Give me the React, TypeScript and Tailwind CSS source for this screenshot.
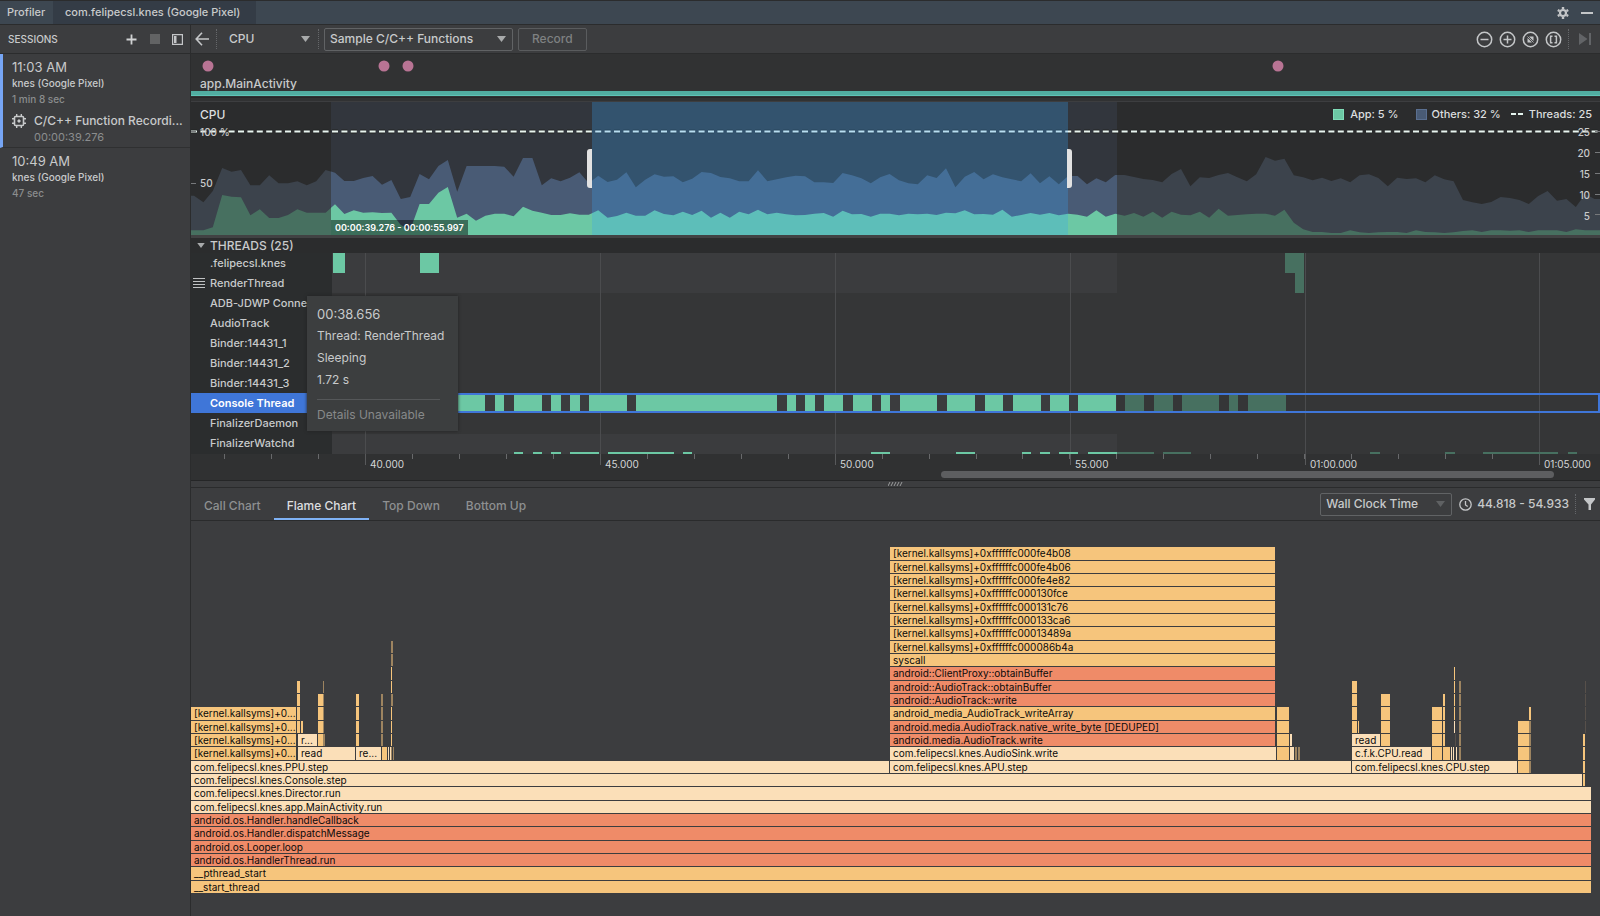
import React from 'react';

// The timeline is laid out on a 1409 unit wide scale that starts at 191
const ORIGIN = 191;
const SPAN = 1409;
const pct = (x: number) => `${((x - ORIGIN) / SPAN) * 100}%`;
const wpct = (a: number, b: number) => `${((b - a) / SPAN) * 100}%`;

const COLORS = {
  k: '#f6c57c',
  l: '#fbdfb8',
  r: '#ef8b68',
  b: '#9d8460',
  d: '#57504a',
};

const othersY = [
  587, 607, 573, 504, 515, 510, 556, 556, 526, 550, 550, 544, 556, 544, 510, 518, 543, 543, 534, 528,
  554, 540, 597, 591, 522, 538, 498, 480, 575, 498, 498, 498, 498, 500, 530, 474, 474, 556, 535, 544,
  533, 517, 550, 527, 546, 539, 517, 562, 539, 523, 530, 529, 547, 536, 516, 519, 531, 535, 544, 544,
  511, 544, 538, 532, 527, 529, 547, 547, 549, 519, 526, 535, 550, 532, 522, 541, 550, 553, 526, 534,
  505, 562, 530, 516, 538, 523, 532, 538, 544, 520, 550, 529, 553, 528, 528, 553, 535, 547, 525, 525,
  531, 537, 540, 547, 522, 507, 559, 532, 534, 525, 519, 532, 544, 523, 471, 482, 476, 526, 532, 541,
  533, 543, 535, 547, 526, 523, 534, 559, 533, 537, 535, 547, 526, 538, 544, 600, 607, 612, 606, 591,
  594, 600, 612, 588, 573, 602, 597, 621, 582, 597, 597,
];

const appY = [
  691, 691, 682, 585, 590, 592, 646, 628, 654, 654, 645, 628, 638, 638, 638, 613, 642, 631, 638, 637,
  639, 638, 675, 690, 612, 612, 578, 561, 653, 641, 662, 647, 641, 641, 649, 620, 632, 638, 645, 645,
  640, 644, 644, 631, 653, 648, 638, 647, 647, 631, 642, 646, 635, 645, 632, 653, 638, 653, 635, 643,
  629, 643, 638, 643, 646, 645, 641, 639, 650, 632, 643, 642, 650, 641, 641, 646, 641, 643, 641, 645,
  638, 640, 631, 643, 642, 644, 629, 650, 645, 639, 644, 639, 646, 641, 644, 650, 631, 650, 641, 647,
  639, 650, 635, 653, 635, 644, 646, 635, 653, 626, 647, 645, 643, 641, 641, 647, 629, 668, 688, 696,
  696, 699, 699, 691, 697, 699, 697, 696, 696, 699, 691, 696, 697, 699, 697, 693, 691, 696, 691, 691,
  692, 691, 696, 691, 691, 691, 696, 688, 691, 691, 691,
];

const area = (ys: number[]) =>
  `0,133 0,${ys[0] / 3 - 102} ` +
  ys.map((y, i) => `${(3 + i * 9.4).toFixed(1)},${(y / 3 - 102).toFixed(1)}`).join(' ') +
  ' 1420,133';

const threads = [
  '.felipecsl.knes', 'RenderThread', 'ADB-JDWP Connection', 'AudioTrack', 'Binder:14431_1',
  'Binder:14431_2', 'Binder:14431_3', 'Console Thread', 'FinalizerDaemon', 'FinalizerWatchd',
];

const running = [
  [332, 485], [495, 504], [514, 542], [551, 561], [570, 580], [589, 627], [636, 777], [787, 796],
  [805, 815], [824, 843], [853, 872], [881, 890], [900, 937], [947, 975], [985, 1003], [1013, 1041],
  [1050, 1069], [1078, 1116],
];
const runningDim = [[1125, 1144], [1154, 1173], [1182, 1219], [1229, 1238], [1248, 1286]];
const watchd = [
  [514, 523], [533, 542], [551, 561], [570, 599], [608, 674], [683, 692], [871, 890], [956, 975],
  [1022, 1031], [1040, 1050], [1059, 1078], [1088, 1117],
];
const watchdDim = [[1117, 1154], [1163, 1191], [1370, 1380], [1445, 1455], [1483, 1558], [1568, 1577]];

const majors = [
  { x: 365, label: '40.000' }, { x: 600, label: '45.000' }, { x: 835, label: '50.000' },
  { x: 1070, label: '55.000' }, { x: 1305, label: '01:00.000' }, { x: 1539, label: '01:05.000' },
];

type Color = keyof typeof COLORS;
// from row, to row (counted from the bottom), left, right, color, label
type Block = [number, number, number, number, Color, string?];

const blocks: Block[] = [
  [0, 0, 191, 1591, 'k', '__start_thread'],
  [1, 1, 191, 1591, 'k', '__pthread_start'],
  [2, 2, 191, 1591, 'r', 'android.os.HandlerThread.run'],
  [3, 3, 191, 1591, 'r', 'android.os.Looper.loop'],
  [4, 4, 191, 1591, 'r', 'android.os.Handler.dispatchMessage'],
  [5, 5, 191, 1591, 'r', 'android.os.Handler.handleCallback'],
  [6, 6, 191, 1591, 'l', 'com.felipecsl.knes.app.MainActivity.run'],
  [7, 7, 191, 1591, 'l', 'com.felipecsl.knes.Director.run'],
  [8, 8, 191, 1582, 'l', 'com.felipecsl.knes.Console.step'],
  [9, 9, 191, 889, 'l', 'com.felipecsl.knes.PPU.step'],
  [9, 9, 890, 1351, 'l', 'com.felipecsl.knes.APU.step'],
  [9, 9, 1352, 1517, 'l', 'com.felipecsl.knes.CPU.step'],
  [10, 10, 191, 296, 'k', '[kernel.kallsyms]+0...'],
  [11, 11, 191, 296, 'k', '[kernel.kallsyms]+0...'],
  [12, 12, 191, 296, 'k', '[kernel.kallsyms]+0...'],
  [13, 13, 191, 296, 'k', '[kernel.kallsyms]+0...'],
  [10, 10, 298, 355, 'l', 'read'],
  [10, 10, 356, 381, 'l', 're...'],
  [10, 10, 382, 387, 'k'],
  [10, 10, 388, 389, 'l'],
  [10, 10, 390, 391, 'l'],
  [10, 10, 391, 392, 'b'],
  [10, 10, 393, 394, 'b'],
  [11, 11, 298, 317, 'l', 'r...'],
  [12, 15, 297, 300, 'k'],
  [12, 12, 301, 303, 'k'],
  [11, 14, 318, 323, 'k'],
  [11, 15, 323, 324, 'b'],
  [11, 11, 324, 325, 'b'],
  [11, 14, 356, 359, 'k'],
  [11, 14, 381, 383, 'b'],
  [11, 16, 391, 392, 'k'],
  [14, 14, 391, 393, 'b'],
  [17, 18, 391, 393, 'b'],
  [10, 10, 890, 1276, 'l', 'com.felipecsl.knes.AudioSink.write'],
  [11, 11, 890, 1275, 'r', 'android.media.AudioTrack.write'],
  [12, 12, 890, 1275, 'r', 'android.media.AudioTrack.native_write_byte [DEDUPED]'],
  [13, 13, 890, 1275, 'k', 'android_media_AudioTrack_writeArray'],
  [14, 14, 890, 1275, 'r', 'android::AudioTrack::write'],
  [15, 15, 890, 1275, 'r', 'android::AudioTrack::obtainBuffer'],
  [16, 16, 890, 1275, 'r', 'android::ClientProxy::obtainBuffer'],
  [17, 17, 890, 1275, 'k', 'syscall'],
  [18, 18, 890, 1275, 'k', '[kernel.kallsyms]+0xffffffc000086b4a'],
  [19, 19, 890, 1275, 'k', '[kernel.kallsyms]+0xffffffc00013489a'],
  [20, 20, 890, 1275, 'k', '[kernel.kallsyms]+0xffffffc000133ca6'],
  [21, 21, 890, 1275, 'k', '[kernel.kallsyms]+0xffffffc000131c76'],
  [22, 22, 890, 1275, 'k', '[kernel.kallsyms]+0xffffffc000130fce'],
  [23, 23, 890, 1275, 'k', '[kernel.kallsyms]+0xffffffc000fe4e82'],
  [24, 24, 890, 1275, 'k', '[kernel.kallsyms]+0xffffffc000fe4b06'],
  [25, 25, 890, 1275, 'k', '[kernel.kallsyms]+0xffffffc000fe4b08'],
  [10, 13, 1277, 1289, 'k'],
  [11, 11, 1290, 1292, 'l'],
  [10, 10, 1290, 1294, 'l'],
  [10, 10, 1295, 1297, 'b'],
  [10, 10, 1298, 1300, 'b'],
  [10, 10, 1352, 1431, 'l', 'c.f.k.CPU.read'],
  [11, 11, 1352, 1380, 'l', 'read'],
  [12, 15, 1352, 1357, 'k'],
  [12, 12, 1358, 1359, 'k'],
  [11, 14, 1381, 1390, 'k'],
  [10, 13, 1432, 1442, 'k'],
  [10, 14, 1443, 1445, 'k'],
  [10, 10, 1445, 1450, 'k'],
  [10, 10, 1451, 1452, 'l'],
  [10, 10, 1453, 1454, 'l'],
  [10, 10, 1456, 1457, 'l'],
  [11, 11, 1455, 1456, 'd'],
  [12, 12, 1454, 1455, 'l'],
  [13, 16, 1454, 1455, 'k'],
  [10, 15, 1459, 1461, 'b'],
  [9, 12, 1518, 1529, 'k'],
  [9, 12, 1529, 1531, 'b'],
  [13, 13, 1529, 1531, 'k'],
  [8, 11, 1583, 1585, 'k'],
  [12, 15, 1585, 1586, 'd'],
];

const rowTop = (row: number) => Math.round(373 - ((row + 1) * 40) / 3);

const Arrow = ({ className }: { className: string }) => (
  <svg className={className} width="9" height="6" viewBox="0 0 9 6" aria-hidden="true">
    <path d="M0 0h9L4.5 6z" fill="currentColor" />
  </svg>
);

const Grip = () => <span className="h-5 border-l border-dotted border-[#65676a]" />;

const ZoomButton = ({ label, children }: { label: string; children: React.ReactNode }) => (
  <button aria-label={label} className="text-[#c4c6c8]">
    <svg width="17" height="17" viewBox="0 0 17 17" fill="none" stroke="currentColor" strokeWidth="1.5">
      <circle cx="8.5" cy="8.5" r="7.2" />
      {children}
    </svg>
  </button>
);

const Sessions = () => (
  <aside className="flex w-[190px] shrink-0 flex-col">
    <div className="flex h-[29px] items-center border-b border-[#2b2c2d] pr-[7px] pl-2">
      <h2 className="grow text-[10px]">SESSIONS</h2>
      <button aria-label="Start session" className="mr-[13px]">
        <svg width="11" height="11" viewBox="0 0 11 11"><path d="M5.5 .5v10M.5 5.5h10" stroke="#d0d2d3" strokeWidth="1.8" /></svg>
      </button>
      <button aria-label="Stop session" disabled className="mr-3">
        <svg width="10" height="10"><path d="M0 0h10v10H0z" fill="#626364" /></svg>
      </button>
      <button aria-label="Hide sessions">
        <svg width="11" height="11" viewBox="0 0 11 11" fill="none">
          <path d="M.6.6h9.8v9.8H.6z" stroke="#c4c6c8" strokeWidth="1.2" />
          <path d="M2 2h2.5v7H2z" fill="#c4c6c8" />
        </svg>
      </button>
    </div>
    <section className="flex flex-col border-b border-b-[#2f3031] border-l-3 border-l-[#76a5f4] pl-[9px]">
      <h3 className="mt-[3px] text-[13px] leading-5 font-normal">11:03 AM</h3>
      <p className="text-[10px] leading-3">knes (Google Pixel)</p>
      <p className="mt-1 text-[10px] leading-3 text-[#8b8d8e]">1 min 8 sec</p>
      <div className="mt-[6px] flex items-center">
        <svg className="shrink-0" width="14" height="14" viewBox="0 0 14 14" fill="none" stroke="#c8cacb" aria-hidden="true">
          <rect x="2.5" y="2.5" width="9" height="9" rx="1" strokeWidth="1.6" />
          <path d="M6 6h2v2H6z" fill="#c8cacb" />
          <path d="M4.7 0v2M9.3 0v2M4.7 12v2M9.3 12v2M0 4.7h2M0 9.3h2M12 4.7h2M12 9.3h2" strokeWidth="1.4" />
        </svg>
        <span className="ml-2 text-xs leading-5 whitespace-nowrap">C/C++ Function Recordi...</span>
      </div>
      <p className="mb-1 pl-[22px] text-[11px] leading-3 font-normal text-[#8b8d8e]">00:00:39.276</p>
    </section>
    <section className="flex flex-col pl-3">
      <h3 className="mt-[3px] text-[13px] leading-5 font-normal">10:49 AM</h3>
      <p className="text-[10px] leading-3">knes (Google Pixel)</p>
      <p className="mt-1 text-[10px] leading-3 text-[#8b8d8e]">47 sec</p>
    </section>
  </aside>
);

const Toolbar = () => (
  <div className="flex h-[29px] items-center border-b border-[#2b2c2d] pr-[9px] pl-1">
    <button aria-label="Back" className="mr-[7px]">
      <svg width="14" height="14" viewBox="0 0 14 14" fill="none" stroke="#c4c6c8" strokeWidth="1.6">
        <path d="M7 .8L1.2 7 7 13.2M1.2 7H14" />
      </svg>
    </button>
    <Grip />
    <label className="relative ml-3 flex w-[89px] items-center">
      <select aria-label="Profiler" className="w-full appearance-none text-xs">
        <option>CPU</option>
      </select>
      <Arrow className="pointer-events-none absolute right-2 text-[#a8aaab]" />
    </label>
    <Grip />
    <label className="relative ml-[5px] flex w-[189px] items-center">
      <select aria-label="Trace type" className="h-[23px] w-full appearance-none rounded-[2px] border border-[#616365] pl-[5px] text-xs">
        <option>Sample C/C++ Functions</option>
      </select>
      <Arrow className="pointer-events-none absolute right-[7px] text-[#a8aaab]" />
    </label>
    <button disabled className="ml-[5px] h-[23px] rounded-[2px] border border-[#5a5c5e] px-[13px] text-xs leading-5 text-[#7f8182]">Record</button>
    <div className="ml-auto flex items-center gap-[6px]">
      <ZoomButton label="Zoom out"><path d="M4.5 8.5h8" /></ZoomButton>
      <ZoomButton label="Zoom in"><path d="M4.5 8.5h8M8.5 4.5v8" /></ZoomButton>
      <ZoomButton label="Reset zoom">
        <path d="M7 5.5h4.5V10zM5.500 7v4.500H10z" fill="currentColor" stroke="none" />
        <path d="M5.500 5.500l6 6" strokeWidth=".8" />
      </ZoomButton>
      <ZoomButton label="Zoom to selection"><path d="M7.5 5.2H5.6v6.6h1.9M9.5 5.2h1.9v6.6H9.5" /></ZoomButton>
      <Grip />
      <button aria-label="Attach to live" disabled className="ml-1">
        <svg width="12" height="12" viewBox="0 0 12 12" fill="#626467"><path d="M0 0l8.5 6L0 12zM10 0h2v12h-2z" /></svg>
      </button>
    </div>
  </div>
);

const Events = () => (
  <div className="flex flex-col border-b border-[#3d3e40] bg-[#313233]">
    <svg className="block h-[22px] w-full" aria-hidden="true">
      {[208, 384, 408, 1278].map((x) => (
        <circle key={x} cx={pct(x)} cy="12" r="5.5" fill="#b87494" />
      ))}
    </svg>
    <div className="pl-[9px] text-xs leading-[15px]">app.MainActivity</div>
    <div className="h-[5px] border-b border-[#5fc4b6] bg-[#51ada1]" />
    <div className="mt-px h-1 border-t border-[#262728]" />
  </div>
);

const Usage = () => (
  <div className="relative h-[133px] bg-[#2b2c2d]">
    <svg className="block h-[133px] w-full" viewBox="0 0 1409 133" preserveAspectRatio="none" aria-label="CPU usage">
      <clipPath id="range"><rect x="140" width="786" height="133" /></clipPath>
      <polygon points={area(othersY)} fill="#3c434c" />
      <polygon points={area(appY)} fill="#477060" />
      <g clipPath="url(#range)">
        <rect x="140" width="786" height="133" fill="#32363d" />
        <polygon points={area(othersY)} fill="#495b75" />
        <polygon points={area(appY)} fill="#6cc8a4" />
      </g>
      <path d="M0 29.5H1409" stroke="#232425" strokeWidth="4" strokeDasharray="6 3.4" />
      <path d="M0 29.5H1409" stroke="#e9f5f0" strokeWidth="2" strokeDasharray="6 3.4" />
      <path d="M0 29.5h5M0 81.5h5M1404 29.5h5M1404 50.5h5M1404 71.5h5M1404 92.5h5M1404 112.5h5" stroke="#77797b" />
      <rect x="401" width="476" height="133" fill="#39a1f3" fillOpacity=".27" />
      <path d="M401 47h-2a3 3 0 0 0-3 3v33a3 3 0 0 0 3 3h2zM876 47h2a3 3 0 0 1 3 3v33a3 3 0 0 1-3 3h-2z" fill="#e2e2e2" />
    </svg>
    <span className="absolute top-1 left-[9px] text-xs leading-[18px] text-[#dcdedf]">CPU</span>
    <span className="absolute top-6 left-[9px] text-[10px] leading-3">100 %</span>
    <span className="absolute top-[75px] left-[9px] text-[10px] leading-3">50</span>
    <div className="absolute top-[3px] right-2 flex items-center text-[11px] leading-[18px] text-[#dcdedf]">
      <span className="mr-[6px] size-[11px] border border-[#7fdcb8] bg-[#6cc8a4]" />App: 5 %
      <span className="mr-[5px] ml-[17px] size-[11px] border border-[#5a6f90] bg-[#495b75]" />Others: 32 %
      <span className="mr-[6px] ml-[10px] flex gap-[2px]">
        <i className="h-[2px] w-[5px] bg-[#e4f4ee]" />
        <i className="h-[2px] w-[5px] bg-[#e4f4ee]" />
      </span>
      Threads: 25
    </div>
    <div className="absolute top-6 right-[10px] flex flex-col gap-[9px] text-right text-[10px] leading-3">
      <span>25</span><span>20</span><span>15</span><span>10</span><span>5</span>
    </div>
    <span className="absolute bottom-0 bg-black/45 px-1 text-[9px] leading-[15px] font-semibold text-white" style={{ left: pct(331) }}>
      00:00:39.276 - 00:00:55.997
    </span>
  </div>
);

const Threads = () => (
  <div className="flex flex-col border-t-3 border-[#414243] bg-[#2b2c2d]">
    <h2 className="flex h-[15px] items-center pl-[6px] text-xs">
      <Arrow className="mr-[5px] h-[5px] w-2 text-[#a8aaab]" />THREADS (25)
    </h2>
    <div className="relative h-[201px] bg-[#2b2d2e]">
      <svg className="absolute inset-0 h-full w-full" shapeRendering="crispEdges" aria-label="Thread activity">
        <rect x={pct(332)} width={wpct(332, 1600)} height="201" fill="#353637" />
        <rect x={pct(332)} width={wpct(332, 1117)} height="40" fill="#3b3c3e" />
        <rect x={pct(332)} y="181" width={wpct(332, 1117)} height="20" fill="#3b3c3e" />
        {majors.map((m) => (
          <rect key={m.x} x={pct(m.x)} width="1" height="201" fill="#4b4c4e" />
        ))}
        <rect x={pct(333)} width={wpct(333, 345)} height="20" fill="#6cc8a4" />
        <rect x={pct(420)} width={wpct(420, 439)} height="20" fill="#6cc8a4" />
        <rect x={pct(1285)} width={wpct(1285, 1304)} height="20" fill="#477060" />
        <rect x={pct(1295)} y="20" width={wpct(1295, 1304)} height="20" fill="#477060" />
        <rect x={pct(332)} y="141" width={wpct(332, 1117)} height="18" fill="#3b3c3e" />
        {running.map(([a, b]) => (
          <rect key={a} x={pct(a)} y="141" width={wpct(a, b)} height="18" fill="#6cc8a4" />
        ))}
        {runningDim.map(([a, b]) => (
          <rect key={a} x={pct(a)} y="141" width={wpct(a, b)} height="18" fill="#477060" />
        ))}
        {watchd.map(([a, b]) => (
          <rect key={a} x={pct(a)} y="199" width={wpct(a, b)} height="2" fill="#6cc8a4" />
        ))}
        {watchdDim.map(([a, b]) => (
          <rect key={a} x={pct(a)} y="199" width={wpct(a, b)} height="2" fill="#477060" />
        ))}
      </svg>
      <ul className="relative text-[11px] leading-5">
        {threads.map((name, i) =>
          i === 7 ? (
            <li key={name} className="flex h-5 border-y-2 border-r-2 border-[#3f76d8]">
              <span className="-my-[2px] w-[141px] bg-[#3f76d8] pl-[19px] font-semibold text-white">{name}</span>
            </li>
          ) : (
            <li key={name} className="flex h-5 items-center">
              <span className="w-[19px] pl-[2px]">
                {i === 1 && (
                  <svg width="12" height="11"><path d="M0 .5h12M0 3.5h12M0 6.5h12M0 9.5h12" stroke="#c0c2c3" /></svg>
                )}
              </span>
              {name}
            </li>
          ),
        )}
      </ul>
      <div role="tooltip" className="absolute top-[43px] flex w-[151px] flex-col bg-[#3c3e3f] px-[10px] text-xs font-normal shadow-[0_0_3px_#222]" style={{ left: pct(307) }}>
        <span className="mt-[7px] text-[13px] leading-[22px]">00:38.656</span>
        <span className="leading-[22px] whitespace-nowrap">Thread: RenderThread</span>
        <span className="leading-[22px]">Sleeping</span>
        <span className="leading-[22px]">1.72 s</span>
        <hr className="mt-2 mr-2 border-[#555759]" />
        <span className="mt-1 mb-[5px] leading-[22px] text-[#87898a]">Details Unavailable</span>
      </div>
    </div>
    <div className="relative h-[27px] border-b border-[#252627] bg-[#303132]">
      <svg className="block h-[26px] w-full text-[10px] font-normal" shapeRendering="crispEdges">
        {Array.from({ length: 29 }, (_, i) => (
          <rect key={i} x={pct(224 + i * 46.97)} width="1" height="5" fill="#68696b" />
        ))}
        {majors.map((m) => (
          <g key={m.x}>
            <rect x={pct(m.x)} width="1" height="11" fill="#58595b" />
            <text x={pct(m.x + 5)} y="14" fill="#d4d6d7">{m.label}</text>
          </g>
        ))}
      </svg>
      <div className="absolute bottom-[2px] h-[7px] rounded-full bg-[#5d5e60]" style={{ left: pct(941), width: wpct(941, 1554) }} />
    </div>
  </div>
);

const tab = 'h-8 px-[13px] pt-[3px] text-xs text-[#8e9091]';

const AnalysisBar = () => (
  <div className="flex h-[34px] items-center border-y border-[#2a2b2c]">
    <div role="tablist" className="flex">
      <button role="tab" className={tab}>Call Chart</button>
      <button role="tab" aria-selected="true" className="h-8 border-b-2 border-[#7fb2f5] px-[13px] pt-[5px] text-xs text-[#dddfe0]">Flame Chart</button>
      <button role="tab" className={tab}>Top Down</button>
      <button role="tab" className={tab}>Bottom Up</button>
    </div>
    <label className="relative ml-auto flex w-[132px] items-center">
      <select aria-label="Clock" className="h-[23px] w-full appearance-none rounded-[2px] border border-[#616365] pl-[5px] text-xs">
        <option>Wall Clock Time</option>
      </select>
      <Arrow className="pointer-events-none absolute right-[7px] text-[#5f6163]" />
    </label>
    <svg className="mr-[5px] ml-[7px]" width="13" height="13" viewBox="0 0 13 13" fill="none" stroke="#c4c6c8" strokeWidth="1.3">
      <circle cx="6.5" cy="6.5" r="5.7" />
      <path d="M6.5 3v4l2.2 1.5" />
    </svg>
    <span className="mr-[6px] text-xs">44.818 - 54.933</span>
    <Grip />
    <button aria-label="Filter" className="mr-[5px] ml-2">
      <svg width="11" height="12" viewBox="0 0 11 12" fill="#c4c6c8"><path d="M0 0h11v1.5L7 6.5V12H4.500V6.500L0 1.500z" /></svg>
    </button>
  </div>
);

const FlameChart = () => (
  <svg className="block h-[395px] w-full text-[10px] font-normal" aria-label="Flame chart">
    {blocks.map(([from, to, a, b, color, label], n) => (
      <g key={n}>
        {Array.from({ length: to - from + 1 }, (_, i) => (
          <rect
            key={i}
            x={pct(a)}
            y={rowTop(from + i)}
            width={wpct(a, b)}
            height={rowTop(from + i - 1) - rowTop(from + i) - 1}
            fill={COLORS[color]}
            shapeRendering="crispEdges"
          />
        ))}
        {label && <text x={pct(a + 3)} y={rowTop(from) + 10} fill="#0a0a0a">{label}</text>}
      </g>
    ))}
  </svg>
);

export default function App() {
  return (
    <div className="flex min-h-screen flex-col bg-[#3c3d3f] font-['Inter',sans-serif] font-medium text-[#c8cacb]">
      <header className="flex h-[25px] items-stretch border-y border-[#2b2c2d] bg-[#3d4751] text-[11px] leading-[23px]">
        <span className="w-[53px] pl-[7px]">Profiler</span>
        <span className="w-[203px] bg-[#343c46] pl-3 whitespace-nowrap">com.felipecsl.knes (Google Pixel)</span>
        <div className="ml-auto flex items-center gap-3 pr-[7px]">
          <button aria-label="Settings">
            <svg width="12" height="12" viewBox="0 0 12 12" fill="none" stroke="#c4c6c8">
              <circle cx="6" cy="6" r="3" strokeWidth="2.2" />
              <path d="M6 0v2M6 10v2M.8 3l1.7 1M9.5 8l1.7 1M.8 9l1.7-1M9.5 4l1.7-1" strokeWidth="2.4" />
            </svg>
          </button>
          <button aria-label="Hide">
            <svg width="12" height="12"><path d="M0 5h12v2H0z" fill="#c4c6c8" /></svg>
          </button>
        </div>
      </header>
      <div className="flex grow">
        <Sessions />
        <main className="flex min-w-0 grow flex-col border-l border-[#2b2c2d]">
          <Toolbar />
          <Events />
          <Usage />
          <Threads />
          <div className="flex h-[6px] items-center justify-center">
            <svg width="15" height="4"><path d="M0 4l2-4M3 4l2-4M6 4l2-4M9 4l2-4M12 4l2-4" stroke="#9b9d9e" /></svg>
          </div>
          <AnalysisBar />
          <FlameChart />
        </main>
      </div>
    </div>
  );
}
